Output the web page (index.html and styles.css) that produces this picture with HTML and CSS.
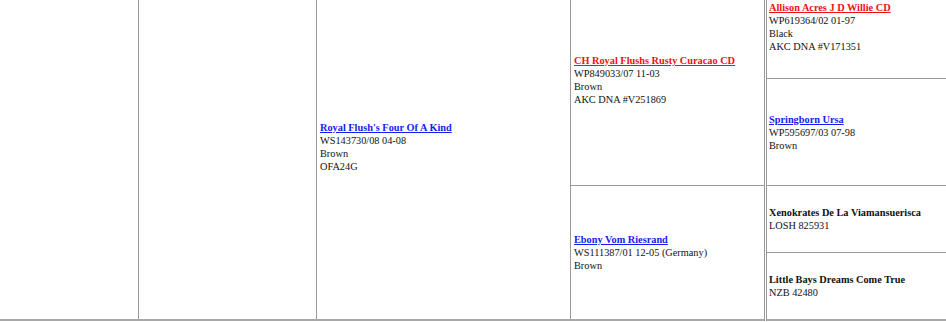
FILE: index.html
```html
<!DOCTYPE html>
<html>
<head>
<meta charset="utf-8">
<link rel="stylesheet" href="styles.css">
</head>
<body>
<table class="ped">
  <colgroup>
    <col class="c1"><col class="c2"><col class="c3"><col class="c4"><col class="c5">
  </colgroup>
  <tr class="r1">
    <td rowspan="4"></td>
    <td rowspan="4"></td>
    <td rowspan="4"><a class="blue" href="#">Royal Flush's Four Of A Kind</a><br>WS143730/08 04-08<br>Brown<br>OFA24G</td>
    <td rowspan="2"><a class="red" href="#">CH Royal Flushs Rusty Curacao CD</a><br>WP849033/07 11-03<br>Brown<br>AKC DNA #V251869</td>
    <td class="last"><a class="red" href="#">Allison Acres J D Willie CD</a><br>WP619364/02 01-97<br>Black<br>AKC DNA #V171351</td>
  </tr>
  <tr class="r2">
    <td class="last"><a class="blue" href="#">Springborn Ursa</a><br>WP595697/03 07-98<br>Brown</td>
  </tr>
  <tr class="r3">
    <td rowspan="2"><a class="blue" href="#">Ebony Vom Riesrand</a><br>WS111387/01 12-05 (Germany)<br>Brown</td>
    <td class="last"><b>Xenokrates De La Viamansuerisca</b><br>LOSH 825931</td>
  </tr>
  <tr class="r4">
    <td class="last"><b>Little Bays Dreams Come True</b><br>NZB 42480</td>
  </tr>
</table>
</body>
</html>
```
FILE: styles.css
```css
html, body {
  margin: 0;
  padding: 0;
  background: #fff;
  overflow: hidden;
}
body {
  font-family: "Liberation Serif", "Times New Roman", serif;
  font-size: 10.3px;
  line-height: 13px;
  color: #111;
}
.ped {
  border-collapse: collapse;
  table-layout: fixed;
  width: 952px;
  margin: -26px 0 0 -2px;
}
.c1 { width: 140px; }
.c2 { width: 178px; }
.c3 { width: 254px; }
.c4 { width: 195px; }
.c5 { width: 185px; }
.ped td {
  border: 1px solid #9a9a9a;
  padding: 0 3px;
  vertical-align: middle;
}
.ped td.last {
  border-left: 3px double #9a9a9a;
  padding-left: 2px;
}
.r1 { height: 104px; }
.r2 { height: 107px; }
.r3 { height: 67px; }
.r4 { height: 67px; }
.r4 td, .ped td[rowspan="4"], .r3 td[rowspan="2"] {
  border-bottom: 2px solid #a8a8a8;
}
a {
  font-weight: bold;
  text-decoration: underline;
}
a.blue { color: #1a1aee; }
a.red { color: #ee1111; }
b { color: #111; }
```
